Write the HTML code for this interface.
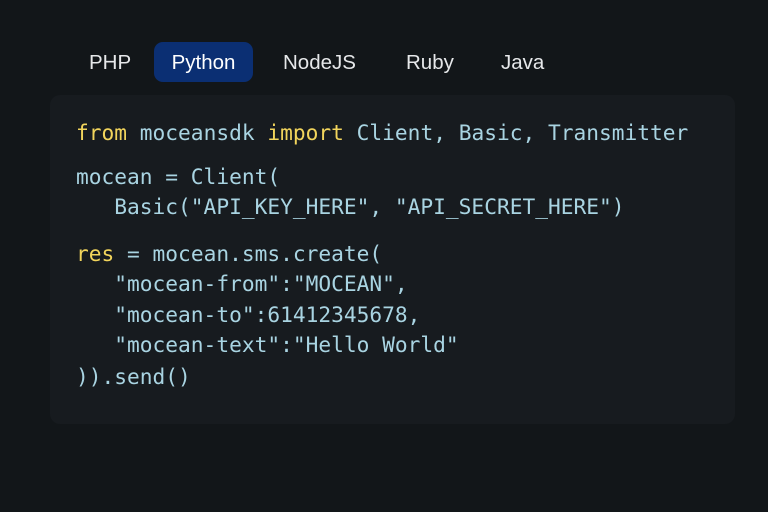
<!DOCTYPE html>
<html><head><style>
body{margin:0;width:768px;height:512px;background:#121619;overflow:hidden;font-family:"Liberation Sans",sans-serif;}
.tab{position:absolute;top:42px;height:40px;line-height:41px;color:#e6e8ea;font-size:20.5px;}
.act{background:#0b2f73;border-radius:9px;width:99px;left:154px;text-align:center;color:#fff;}
.card{position:absolute;left:50px;top:95px;width:685px;height:329px;background:#171b1f;border-radius:10px;}
.l{position:absolute;left:76px;font-family:"DejaVu Sans Mono",monospace;font-size:21.2px;color:#a9d4e2;white-space:pre;line-height:30px;}
.k{color:#f2d55c;}
</style></head><body>
<div class="tab" style="left:89px">PHP</div>
<div class="tab act">Python</div>
<div class="tab" style="left:283px">NodeJS</div>
<div class="tab" style="left:406px">Ruby</div>
<div class="tab" style="left:501px">Java</div>
<div class="card"></div>
<div class="l" style="top:118px"><span class="k">from</span> moceansdk <span class="k">import</span> Client, Basic, Transmitter</div>
<div class="l" style="top:162px">mocean = Client(</div>
<div class="l" style="top:192px">   Basic("API_KEY_HERE", "API_SECRET_HERE")</div>
<div class="l" style="top:239px"><span class="k">res</span> = mocean.sms.create(</div>
<div class="l" style="top:269px">   "mocean-from":"MOCEAN",</div>
<div class="l" style="top:300px">   "mocean-to":61412345678,</div>
<div class="l" style="top:330px">   "mocean-text":"Hello World"</div>
<div class="l" style="top:362px">)).send()</div>
</body></html>
